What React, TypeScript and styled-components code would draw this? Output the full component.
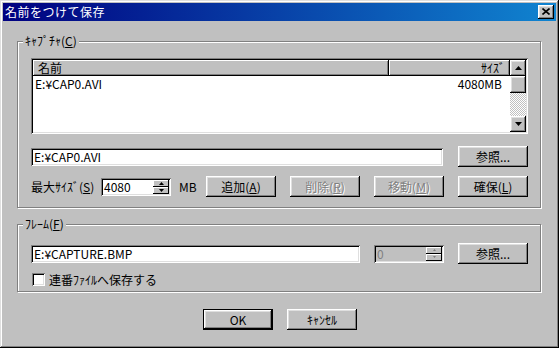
import React from 'react';
import styled, { createGlobalStyle, css } from 'styled-components';

const Global = createGlobalStyle`
  html, body { margin: 0; padding: 0; background: #c0c0c0; }
  body {
    font-family: "Noto Sans CJK JP", "Noto Sans", sans-serif;
    font-size: 12px;
    line-height: 14px;
    color: #000;
  }
  * { box-sizing: border-box; }
`;

const raised = css`
  box-shadow: inset -1px -1px #000, inset 1px 1px #fff, inset -2px -2px #808080, inset 2px 2px #dfdfdf;
`;
const sunken = css`
  box-shadow: inset 1px 1px #808080, inset -1px -1px #fff, inset 2px 2px #000, inset -2px -2px #dfdfdf;
`;

const Window = styled.div`
  width: 559px;
  height: 348px;
  background: #c0c0c0;
  box-shadow: inset -1px -1px #000, inset 1px 1px #dfdfdf, inset -2px -2px #808080, inset 2px 2px #fff;
  padding: 3px;
  display: flex;
  flex-direction: column;
`;

const TitleBar = styled.div`
  height: 18px;
  background: linear-gradient(90deg, #000080, #1084d0);
  display: flex;
  align-items: center;
  justify-content: space-between;
  padding: 0 2px;
  color: #fff;
`;

const TitleText = styled.span`
  font-size: 12px;
  line-height: 14px;
  letter-spacing: 0.5px;
`;

const CloseButton = styled.div`
  width: 16px;
  height: 14px;
  background: #c0c0c0;
  ${raised};
  display: flex;
  align-items: center;
  justify-content: center;
  padding-bottom: 1px;
`;

const Body = styled.div`
  flex: 1;
  padding: 20px 14px 0;
  display: flex;
  flex-direction: column;
`;

const Group = styled.div<{ $top?: number }>`
  position: relative;
  width: 524px;
  margin-top: ${p => p.$top ?? 0}px;
  border: 1px solid #808080;
  box-shadow: 1px 1px 0 #fff, inset 1px 1px 0 #fff;
  display: flex;
  flex-direction: column;
`;

const CaptureGroup = styled(Group)`
  padding: 16px 12px 10px 13px;
`;

const FrameGroup = styled(Group)`
  padding: 18px 12px 5px 13px;
`;

const Legend = styled.div`
  position: absolute;
  top: -8px;
  left: 5px;
  padding: 0 2px;
  background: #c0c0c0;
  line-height: 14px;
`;

const U = styled.u`
  text-decoration: underline;
  text-underline-offset: 1px;
`;

const ListView = styled.div`
  height: 76px;
  background: #fff;
  ${sunken};
  padding: 2px;
  display: flex;
`;

const ListMain = styled.div`
  flex: 1;
  display: flex;
  flex-direction: column;
  min-width: 0;
`;

const Header = styled.div`
  display: flex;
  height: 16px;
`;

const HeaderCell = styled.div<{ $w: number; $right?: boolean }>`
  width: ${p => p.$w}px;
  height: 16px;
  background: #c0c0c0;
  box-shadow: inset -1px -1px #000, inset 1px 1px #fff, inset -2px -2px #808080;
  padding: 0 ${p => (p.$right ? 5 : 0)}px 0 ${p => (p.$right ? 0 : 5)}px;
  text-align: ${p => (p.$right ? 'right' : 'left')};
  line-height: 15px;
  white-space: nowrap;
`;

const ListRow = styled.div`
  display: flex;
  height: 14px;
  line-height: 14px;
  padding: 1px 8px 0 2px;
  justify-content: space-between;
`;

const ScrollBar = styled.div`
  width: 16px;
  display: flex;
  flex-direction: column;
`;

const ScrollBtn = styled.div<{ $h?: number }>`
  width: 16px;
  height: ${p => p.$h ?? 16}px;
  background: #c0c0c0;
  ${raised};
  display: flex;
  align-items: center;
  justify-content: center;
`;

const Track = styled.div`
  flex: 1;
  background: repeating-conic-gradient(#c0c0c0 0% 25%, #fff 0% 50%) 0 0 / 2px 2px;
`;

const Row = styled.div<{ $top?: number; $gap?: number }>`
  display: flex;
  align-items: center;
  height: 21px;
  margin-top: ${p => p.$top ?? 0}px;
  gap: ${p => p.$gap ?? 0}px;
`;

const Edit = styled.input`
  flex: 1;
  min-width: 0;
  height: 18px;
  border: none;
  outline: none;
  background: #fff;
  ${sunken};
  padding: 0 3px;
  font: inherit;
  color: #000;
`;

const Button = styled.button<{ $default?: boolean; $ml?: number }>`
  width: 70px;
  height: 21px;
  flex: none;
  margin-left: ${p => p.$ml ?? 0}px;
  background: #c0c0c0;
  border: none;
  padding: 0;
  font: inherit;
  line-height: 14px;
  color: #000;
  ${raised};
  ${p =>
    p.$default &&
    css`
      box-shadow: inset 0 0 0 1px #000, inset -2px -2px #000, inset 2px 2px #fff, inset -3px -3px #808080,
        inset 3px 3px #dfdfdf;
    `}
  &:disabled {
    color: #808080;
    text-shadow: 1px 1px 0 #fff;
  }
`;

const FieldLabel = styled.span`
  width: 70px;
  flex: none;
  white-space: nowrap;
`;

const Unit = styled.span`
  width: 27px;
  margin-left: 8px;
  flex: none;
`;

const ButtonGroup = styled.div`
  display: flex;
  gap: 14px;
`;

const Spin = styled.div<{ $disabled?: boolean }>`
  width: 70px;
  height: 18px;
  flex: none;
  display: flex;
  padding: 2px;
  background: ${p => (p.$disabled ? '#c0c0c0' : '#fff')};
  ${sunken};
`;

const SpinText = styled.span<{ $disabled?: boolean }>`
  flex: 1;
  padding-left: 1px;
  line-height: 14px;
  color: ${p => (p.$disabled ? '#808080' : '#000')};
`;

const SpinButtons = styled.div`
  width: 16px;
  display: flex;
  flex-direction: column;
`;

const SpinBtn = styled.div`
  flex: 1;
  background: #c0c0c0;
  box-shadow: inset -1px -1px #000, inset 1px 1px #fff;
  display: flex;
  align-items: center;
  justify-content: center;
`;

const CheckRow = styled.label`
  display: flex;
  align-items: center;
  height: 13px;
  margin-top: 9px;
  padding-left: 1px;
`;

const CheckBox = styled.span`
  width: 13px;
  height: 13px;
  background: #fff;
  ${sunken};
  margin-right: 4px;
`;

const Footer = styled.div`
  display: flex;
  justify-content: center;
  gap: 14px;
  margin-top: 17px;
  padding-left: 1px;
`;

const Arrow = ({ up, color = '#000', w = 7 }: { up?: boolean; color?: string; w?: number }) => {
  const h = Math.ceil(w / 2);
  const pts = up ? `0,${h} ${w},${h} ${w / 2},0` : `0,0 ${w},0 ${w / 2},${h}`;
  return (
    <svg width={w} height={h} viewBox={`0 0 ${w} ${h}`} style={{ display: 'block' }}>
      <polygon points={pts} fill={color} />
    </svg>
  );
};

export default function App() {
  return (
    <>
      <Global />
      <Window>
        <TitleBar>
          <TitleText>名前をつけて保存</TitleText>
          <CloseButton>
            <svg width="8" height="7" viewBox="0 0 8 7">
              <path d="M0.5 0.5 L7.5 6.5 M7.5 0.5 L0.5 6.5" stroke="#000" strokeWidth="1.6" />
            </svg>
          </CloseButton>
        </TitleBar>
        <Body>
          <CaptureGroup>
            <Legend>
              ｷｬﾌﾟﾁｬ(<U>C</U>)
            </Legend>
            <ListView>
              <ListMain>
                <Header>
                  <HeaderCell $w={356}>名前</HeaderCell>
                  <HeaderCell $w={121} $right>
                    ｻｲｽﾞ
                  </HeaderCell>
                </Header>
                <ListRow>
                  <span>E:¥CAP0.AVI</span>
                  <span>4080MB</span>
                </ListRow>
              </ListMain>
              <ScrollBar>
                <ScrollBtn>
                  <Arrow up />
                </ScrollBtn>
                <ScrollBtn $h={17} />
                <Track />
                <ScrollBtn>
                  <Arrow />
                </ScrollBtn>
              </ScrollBar>
            </ListView>
            <Row $top={12} $gap={15}>
              <Edit readOnly defaultValue="E:¥CAP0.AVI" />
              <Button>参照...</Button>
            </Row>
            <Row $top={9}>
              <FieldLabel>
                最大ｻｲｽﾞ(<U>S</U>)
              </FieldLabel>
              <Spin>
                <SpinText>4080</SpinText>
                <SpinButtons>
                  <SpinBtn>
                    <Arrow up w={5} />
                  </SpinBtn>
                  <SpinBtn>
                    <Arrow w={5} />
                  </SpinBtn>
                </SpinButtons>
              </Spin>
              <Unit>MB</Unit>
              <ButtonGroup>
                <Button>
                  追加(<U>A</U>)
                </Button>
                <Button disabled>
                  削除(<U>R</U>)
                </Button>
                <Button disabled>
                  移動(<U>M</U>)
                </Button>
                <Button>
                  確保(<U>L</U>)
                </Button>
              </ButtonGroup>
            </Row>
          </CaptureGroup>
          <FrameGroup $top={16}>
            <Legend>
              ﾌﾚｰﾑ(<U>F</U>)
            </Legend>
            <Row $gap={14}>
              <Edit readOnly defaultValue="E:¥CAPTURE.BMP" />
              <Spin $disabled>
                <SpinText $disabled>0</SpinText>
                <SpinButtons>
                  <SpinBtn>
                    <Arrow up w={3} color="#808080" />
                  </SpinBtn>
                  <SpinBtn>
                    <Arrow w={3} color="#808080" />
                  </SpinBtn>
                </SpinButtons>
              </Spin>
              <Button>参照...</Button>
            </Row>
            <CheckRow>
              <CheckBox />
              連番ﾌｧｲﾙへ保存する
            </CheckRow>
          </FrameGroup>
          <Footer>
            <Button $default>OK</Button>
            <Button>ｷｬﾝｾﾙ</Button>
          </Footer>
        </Body>
      </Window>
    </>
  );
}
